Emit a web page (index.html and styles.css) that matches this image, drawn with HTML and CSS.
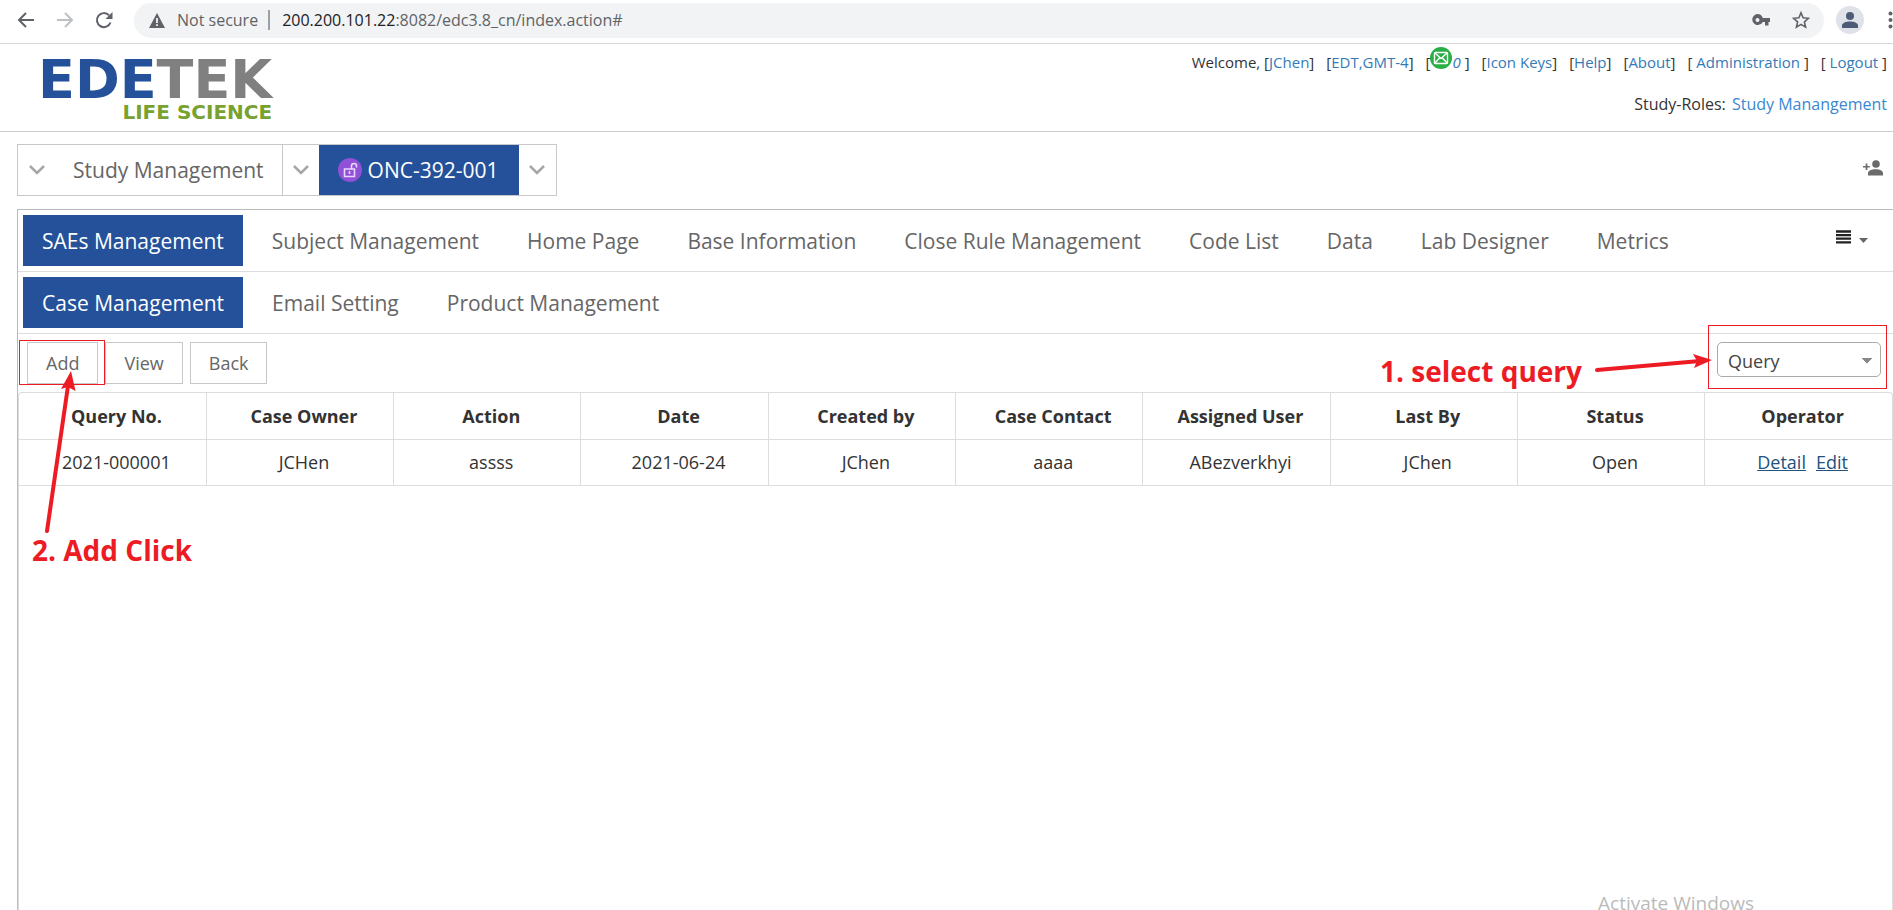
FILE: index.html
```html
<!DOCTYPE html>
<html lang="en">
<head>
<meta charset="utf-8">
<title>EDETEK Life Science - Case Management</title>
<link rel="stylesheet" href="styles.css">
</head>
<body>
<div class="browser">
  <button class="browser-btn" aria-label="Back"><svg width="18" height="18" viewBox="0 0 18 18" fill="none" stroke="#5f6368" stroke-width="2"><path d="M17 9H2M9 2L2 9l7 7"/></svg></button>
  <button class="browser-btn" aria-label="Forward"><svg width="18" height="18" viewBox="0 0 18 18" fill="none" stroke="#bdc1c6" stroke-width="2"><path d="M1 9h15M9 2l7 7-7 7"/></svg></button>
  <button class="browser-btn" aria-label="Reload"><svg width="18" height="18" viewBox="0 0 18 18"><path d="M15.5 11.5A7 7 0 1 1 14 4.300" fill="none" stroke="#5f6368" stroke-width="2"/><path d="M17.500 1v7h-7z" fill="#5f6368"/></svg></button>
  <div class="omnibox">
    <svg width="16" height="15" viewBox="0 0 16 15"><path d="M8 0l8 15H0z" fill="#5f6368"/><path d="M7.100 5h1.800v5H7.100zM7.100 11.200h1.800V13H7.100z" fill="#f1f3f4"/></svg>
    <span class="insecure">Not secure</span>
    <span class="url"><b class="host">200.200.101.22</b>:8082/edc3.8_cn/index.action#</span>
    <svg class="key" width="18" height="12" viewBox="0 0 18 12"><path fill="#5f6368" fill-rule="evenodd" d="M5.500 0a5.500 5.500 0 0 1 5.200 4H18v4h-1.500v3.500H13V8h-2.300A5.500 5.500 0 1 1 5.500 0zm0 4a2 2 0 1 0 0 4 2 2 0 0 0 0-4z"/></svg>
    <svg width="18" height="18" viewBox="0 0 18 18"><path d="M9 1.800l2.100 5 5.400.5-4.100 3.600 1.200 5.300L9 13.400l-4.600 2.800 1.200-5.300L1.500 7.300l5.400-.5z" fill="none" stroke="#5f6368" stroke-width="1.600"/></svg>
  </div>
  <button class="avatar" aria-label="Profile"><svg width="16" height="16" viewBox="0 0 16 16" fill="#4d5b76"><circle cx="8" cy="4" r="4"/><path d="M0 16v-2.500C0 11 4 9.500 8 9.500s8 1.500 8 4V16z"/></svg></button>
  <button class="more" aria-label="Menu"><svg width="5" height="18" viewBox="0 0 5 18" fill="#5f6368"><circle cx="2.500" cy="2.500" r="2"/><circle cx="2.500" cy="9" r="2"/><circle cx="2.500" cy="15.500" r="2"/></svg></button>
</div>

<header class="header">
  <div class="logo">
    <div class="logo-name"><span class="logo-blue">EDE</span>TEK</div>
    <div class="logo-tag">LIFE SCIENCE</div>
  </div>
  <div class="account">
    <div class="links">
      <span>Welcome, [<a href="#">JChen</a>]</span>
      <span>[<a href="#">EDT,GMT-4</a>]</span>
      <span class="mail">[<svg class="mail-icon" width="22" height="22" viewBox="0 0 22 22"><circle cx="11" cy="11" r="11" fill="#2bae45"/><rect x="4.500" y="5.500" width="13" height="11" rx="1" fill="none" stroke="#fff" stroke-width="1.400"/><path d="M5 6l6 5.500L17 6M5 16l4.500-5M17 16l-4.500-5" fill="none" stroke="#fff" stroke-width="1.400"/></svg><a href="#"><i>0</i></a> ]</span>
      <span>[<a href="#">Icon Keys</a>]</span>
      <span>[<a href="#">Help</a>]</span>
      <span>[<a href="#">About</a>]</span>
      <span>[ <a href="#">Administration</a> ]</span>
      <span>[ <a href="#">Logout</a> ]</span>
    </div>
    <div class="roles">Study-Roles: <a class="role" href="#">Study Manangement</a></div>
  </div>
</header>

<div class="studybar">
  <div class="crumbs">
    <button class="drop" aria-label="Open list"><svg width="16" height="10" viewBox="0 0 16 10"><path d="M1 1l7 7 7-7" fill="none" stroke="#a6a6a6" stroke-width="2.500"/></svg></button>
    <button class="crumb">Study Management</button>
    <button class="drop edge" aria-label="Open studies"><svg width="16" height="10" viewBox="0 0 16 10"><path d="M1 1l7 7 7-7" fill="none" stroke="#a6a6a6" stroke-width="2.500"/></svg></button>
    <button class="crumb active"><svg width="24" height="24" viewBox="0 0 24 24"><circle cx="12" cy="12" r="12" fill="#9150d8"/><path d="M6.500 11h10v7.500h-10zM13.500 11V8a2.500 2.500 0 0 1 5 0v1.500" fill="none" stroke="#e9d8fb" stroke-width="1.600"/><path d="M11.500 13v3" stroke="#e9d8fb" stroke-width="1.600"/></svg>ONC-392-001</button>
    <button class="drop" aria-label="Open sites"><svg width="16" height="10" viewBox="0 0 16 10"><path d="M1 1l7 7 7-7" fill="none" stroke="#a6a6a6" stroke-width="2.500"/></svg></button>
  </div>
  <button class="add-user" aria-label="Add user"><svg width="20" height="16" viewBox="0 0 20 16" fill="#6b6b6b"><circle cx="13" cy="4" r="3.800"/><path d="M5 15.500V13c0-2.500 4-3.800 7.700-3.800S20 10.500 20 13v2.500zM2.700 3.500h1.700V6h2.400v1.600H4.400V10H2.700V7.600H0V6h2.700z"/></svg></button>
</div>

<main class="panel">
  <nav class="tabs">
    <button class="tab active">SAEs Management</button>
    <button class="tab">Subject Management</button>
    <button class="tab">Home Page</button>
    <button class="tab">Base Information</button>
    <button class="tab">Close Rule Management</button>
    <button class="tab">Code List</button>
    <button class="tab">Data</button>
    <button class="tab">Lab Designer</button>
    <button class="tab">Metrics</button>
    <button class="tabs-menu" aria-label="More tabs"><svg width="32" height="14" viewBox="0 0 32 14"><path d="M0 1.500h15M0 5.100h15M0 8.700h15M0 12.300h15" stroke="#222" stroke-width="2.300"/><path d="M23 8h9l-4.500 5z" fill="#666"/></svg></button>
  </nav>
  <nav class="tabs">
    <button class="tab active">Case Management</button>
    <button class="tab">Email Setting</button>
    <button class="tab">Product Management</button>
  </nav>
  <div class="toolbar">
    <button class="tool">Add</button>
    <button class="tool">View</button>
    <button class="tool">Back</button>
    <select class="picker" aria-label="Record type"><option>Query</option></select>
  </div>
  <div class="records">
    <table>
      <thead>
        <tr><th>Query No.</th><th>Case Owner</th><th>Action</th><th>Date</th><th>Created by</th><th>Case Contact</th><th>Assigned User</th><th>Last By</th><th>Status</th><th>Operator</th></tr>
      </thead>
      <tbody>
        <tr><td>2021-000001</td><td>JCHen</td><td>assss</td><td>2021-06-24</td><td>JChen</td><td>aaaa</td><td>ABezverkhyi</td><td>JChen</td><td>Open</td><td><a href="#">Detail</a><a href="#">Edit</a></td></tr>
      </tbody>
    </table>
  </div>

  <div class="frame frame-add"></div>
  <div class="frame frame-query"></div>
  <svg class="arrow-add" width="40" height="166" viewBox="0 0 40 166"><path d="M7 161L28 16" stroke="#ed1c24" stroke-width="4" stroke-linecap="round"/><path d="M31 1l4.500 20-7.500-4-7 2z" fill="#ed1c24"/></svg>
  <svg class="arrow-query" width="124" height="24" viewBox="0 0 124 24"><path d="M4 17L107 8" stroke="#ed1c24" stroke-width="4" stroke-linecap="round"/><path d="M119 7L101 15l3-7-4-7z" fill="#ed1c24"/></svg>
  <p class="note note-query">1. select query</p>
  <p class="note note-add">2. Add Click</p>
</main>
<div class="watermark">Activate Windows</div>
</body>
</html>
```
FILE: styles.css
```css
* { box-sizing: border-box; }
body {
  margin: 0;
  height: 100vh;
  display: flex;
  flex-direction: column;
  overflow: hidden;
  background: #fff;
  color: #333;
  font-family: "Open Sans", "Noto Sans", sans-serif;
  font-size: 15px;
}
button, select { font: inherit; color: inherit; background: none; border: 0; padding: 0; margin: 0; }
a { color: #337ab7; text-decoration: none; }
svg { display: block; flex: none; }

.browser {
  display: flex;
  align-items: center;
  height: 44px;
  padding: 0 0 3px 17px;
  border-bottom: 1px solid #d5d7da;
}
.browser-btn { width: 18px; margin-right: 21px; }
.omnibox {
  flex: 1;
  display: flex;
  align-items: center;
  height: 35px;
  margin-right: 12px;
  padding: 0 14px 0 15px;
  border-radius: 18px;
  background: #f1f3f4;
  font-size: 16px;
  color: #5f6368;
}
.insecure { margin-left: 12px; padding-right: 10px; border-right: 2px solid #9aa0a6; line-height: 20px; }
.url { margin-left: 12px; }
.host { font-weight: 400; color: #202124; }
.key { margin-left: auto; margin-right: 22px; }
.avatar { width: 28px; height: 28px; border-radius: 50%; background: #dfe3e9; display: flex; align-items: center; justify-content: center; }
.more { margin-left: 24px; width: 5px; }

.header {
  display: flex;
  justify-content: space-between;
  height: 88px;
  padding: 0 6px 0 38px;
  border-bottom: 1px solid #ccc;
}
.logo { padding-top: 16px; font-family: "DejaVu Sans", sans-serif; font-weight: 700; }
.logo-name { font-size: 54px; line-height: 40px; color: #808080; }
.logo-blue { color: #24519a; }
.logo-tag { font-size: 20px; line-height: 24px; text-align: right; color: #78a22f; }
.account { text-align: right; }
.links { display: flex; gap: 12px; padding-top: 7px; line-height: 22px; }
.mail { display: flex; white-space: pre; }
.mail-icon { margin-top: -4px; }
.roles { margin-top: 20px; font-size: 16px; line-height: 22px; }
.role { margin-left: 2px; color: #3a87d2; }

.studybar {
  display: flex;
  justify-content: space-between;
  padding: 12px 10px 13px 17px;
}
.crumbs { display: flex; height: 52px; border: 1px solid #c8c8c8; font-size: 21px; }
.drop { width: 37px; display: flex; align-items: center; justify-content: center; }
.crumb { padding: 0 18px; color: #666; }
.edge { border-left: 1px solid #c8c8c8; }
.crumb.active { display: flex; align-items: center; gap: 6px; padding: 0 20px 0 19px; background: #24519a; color: #fff; }
.add-user { align-self: flex-start; margin-top: 16px; }

.panel { position: relative; flex: 1; display: flex; flex-direction: column; margin-left: 17px; border-top: 1px solid #bbb; border-left: 1px solid #bbb; }
.tabs {
  display: flex;
  align-items: center;
  gap: 10px;
  height: 62px;
  padding: 0 25px 0 5px;
  border-bottom: 1px solid #ddd;
  font-size: 21px;
}
.tab { height: 51px; padding: 0 19px; color: #666; white-space: nowrap; }
.tab.active { background: #24519a; color: #fff; }
.tabs-menu { margin-left: auto; padding-bottom: 8px; }

.toolbar { display: flex; gap: 7px; height: 58px; padding: 8px 12px 0 9px; font-size: 18px; }
.tool { height: 42px; padding: 0 18px; border: 1px solid #c8c8c8; color: #666; }
.picker {
  appearance: none;
  width: 164px;
  height: 35px;
  margin-left: auto;
  padding: 2px 10px 0;
  border: 1px solid #aaa;
  border-radius: 5px;
  color: #444;
  background: linear-gradient(to bottom left, #888 50%, transparent 51%) 144px 15px / 5px 6px no-repeat,
    linear-gradient(to bottom right, #888 50%, transparent 51%) 149px 15px / 5px 6px no-repeat;
}
.records { flex: 1; border: 1px solid #ddd; border-bottom: 0; border-radius: 4px 4px 0 0; }
table { width: 100%; table-layout: fixed; border-collapse: collapse; font-size: 18px; }
th, td { height: 46px; padding: 0 0 0 8px; text-align: center; border-right: 1px solid #ddd; border-bottom: 1px solid #ddd; }
th:last-child, td:last-child { border-right: 0; }
td a { color: #23527c; text-decoration: underline; }
td a + a { margin-left: 10px; }

.frame { position: absolute; border: 1px solid #ed1c24; }
.frame-add { left: 1px; top: 130px; width: 86px; height: 45px; }
.frame-query { right: 6px; top: 115px; width: 179px; height: 64px; }
.arrow-add { position: absolute; left: 22px; top: 160px; }
.arrow-query { position: absolute; right: 176px; top: 143px; }
.note { position: absolute; margin: 0; font-size: 28px; line-height: 36px; font-weight: 700; color: #ed1c24; }
.note-query { right: 311px; top: 143px; }
.note-add { left: 14px; top: 322px; }
.watermark { position: absolute; right: 139px; bottom: -7px; font-size: 19px; line-height: 28px; color: #bbb; }
```
